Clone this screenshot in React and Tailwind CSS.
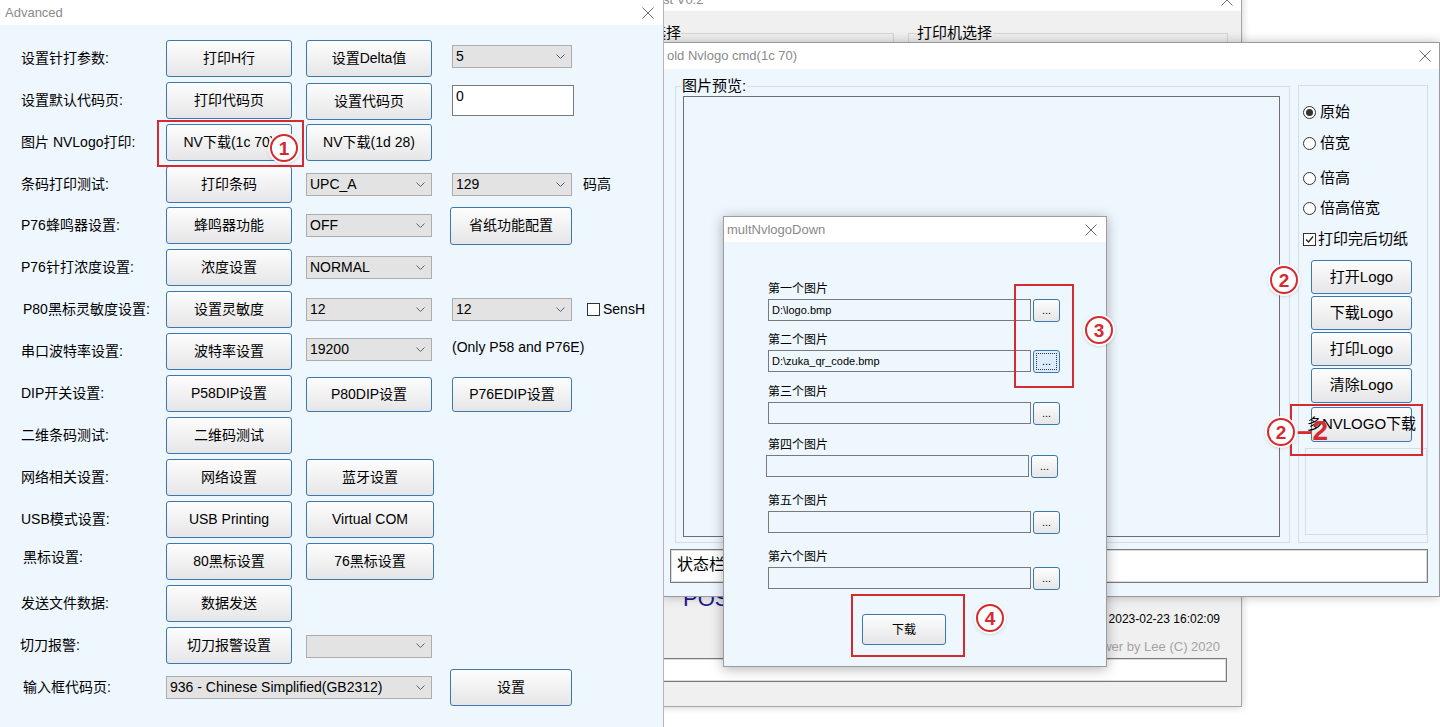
import React from 'react'

// shared bits for the old-style win forms
const CloseX = () => (
  <svg width="12" height="12" viewBox="0 0 12 12">
    <path d="M0.5 0.5L11.5 11.5M11.5 0.5L0.5 11.5" stroke="#6b6b6b" strokeWidth="1" />
  </svg>
)

const Btn = ({ children, className = '' }) => (
  <button
    className={`flex shrink-0 items-center justify-center whitespace-nowrap rounded-[3px] border border-[#3c78b0] bg-linear-to-b from-[#fdfdfd] to-[#e6e6e8] text-black ${className}`}
  >
    {children}
  </button>
)

const Combo = ({ value, className = '' }) => (
  <div
    className={`flex h-[23px] shrink-0 items-center justify-between border border-[#adadad] bg-[#e3e3e3] pl-[3px] pr-[6px] text-[14px] text-black ${className}`}
  >
    <span>{value}</span>
    <svg width="9" height="6" viewBox="0 0 9 6">
      <path d="M0.5 0.5L4.5 4.5L8.5 0.5" fill="none" stroke="#606060" />
    </svg>
  </div>
)

const CheckBox = ({ checked }) => (
  <span className="flex h-[13px] w-[13px] shrink-0 items-center justify-center border border-[#333] bg-white">
    {checked && (
      <svg width="9" height="9" viewBox="0 0 9 9">
        <path d="M1 4.5L3.5 7L8 1.5" fill="none" stroke="#222" strokeWidth="1.3" />
      </svg>
    )}
  </span>
)

const Radio = ({ checked }) => (
  <span className="flex h-[13px] w-[13px] shrink-0 items-center justify-center rounded-full border border-[#333] bg-white">
    {checked && <span className="h-[7px] w-[7px] rounded-full bg-[#333]" />}
  </span>
)

const Row = ({ label, labelClass = 'pl-[21px]', className = '', children }) => (
  <div className={`mb-[5px] flex h-[37px] items-center ${className}`}>
    <div className={`w-[166px] shrink-0 text-[14px] text-black ${labelClass}`}>{label}</div>
    {children}
  </div>
)

const FileRow = ({ label, value, className = '', boxClass = '', focus }) => (
  <div className={className}>
    <div className="h-[16px] text-[12px] leading-[16px] text-black">{label}</div>
    <div className={`mt-[2px] flex ${boxClass}`}>
      <div className="h-[22px] w-[263px] border border-[#7a7a7a] pl-[3px] text-[11px] leading-[20px] text-black">
        {value}
      </div>
      {focus ? (
        <button className="ml-[2px] flex h-[23px] w-[27px] items-center justify-center rounded-[3px] border border-[#3c78b0] bg-[#dcecfc] p-[2px]">
          <span className="flex h-full w-full items-center justify-center border border-dotted border-[#333] text-[11px] leading-none">...</span>
        </button>
      ) : (
        <Btn className="ml-[2px] h-[23px] w-[27px] text-[11px] leading-none">...</Btn>
      )}
    </div>
  </div>
)

const Num = ({ n, className = '' }) => (
  <div
    className={`absolute z-50 flex h-[28px] w-[28px] items-center justify-center rounded-full border-2 border-[#d42a30] bg-white text-[19px] font-bold leading-none text-[#d42a30] shadow-[0_0_0_2px_rgba(255,255,255,0.9),0_1px_4px_rgba(0,0,0,0.35)] ${className}`}
  >
    {n}
  </div>
)

export default function App() {
  return (
    <div className="relative h-[727px] w-[1440px] overflow-hidden bg-white font-['Liberation_Sans','Noto_Sans_CJK_SC',sans-serif]">
      {/* back main window */}
      <div className="absolute -top-[16px] left-[560px] z-10 flex h-[723px] w-[682px] flex-col border border-[#a5a5a5] bg-[#f0f0f0] shadow-[0_0_8px_rgba(0,0,0,0.2)]">
        <div className="flex h-[26px] items-center justify-between bg-white pl-[102px] pr-[8px] pt-[4px] text-[13px] text-[#8a8a8a]">
          <span>st V0.2</span>
          <CloseX />
        </div>
        <div className="mt-[22px] flex">
          <div className="relative ml-[19px] h-[200px] w-[314px] border border-[#d5d5d5]">
            <span className="absolute -top-[10px] left-[40px] bg-[#f0f0f0] text-[15px] leading-[18px]">端口选择</span>
          </div>
          <div className="relative ml-[14px] h-[200px] w-[320px] border border-[#d5d5d5]">
            <span className="absolute -top-[10px] left-[7px] bg-[#f0f0f0] px-[1px] text-[15px] leading-[18px]">打印机选择</span>
          </div>
        </div>
        <div className="mt-auto">
          <div className="h-[22px] pl-[122px] text-[22px] leading-[22px] text-[#1c1c96]">POS</div>
          <div className="pr-[21px] text-right text-[12px] leading-[18px] text-black">2023-02-23 16:02:09</div>
          <div className="mt-[10px] pr-[21px] text-right text-[13px] leading-[18px] text-[#a3a3a3]">wer by Lee (C) 2020</div>
          <div className="mr-[14px] mt-[2px] h-[24px] border border-[#7a7a7a] bg-white shadow-[inset_0_0_0_1px_#dcdcdc]" />
          <div className="h-[24px]" />
        </div>
      </div>

      {/* Nvlogo window */}
      <div className="absolute left-[663px] top-[42px] z-20 h-[555px] w-[777px] border border-[#9a9a9a] bg-[#eef6fe] shadow-[0_0_10px_rgba(0,0,0,0.25)]">
        <div className="flex h-[26px] items-center justify-between bg-white pl-[3px] pr-[8px] text-[13px] text-[#8a8a8a]">
          <span>old Nvlogo cmd(1c 70)</span>
          <CloseX />
        </div>
        <div className="flex px-[11px] pt-[17px]">
          <div className="relative h-[457px] w-[615px] border border-[#d6dde3]">
            <span className="absolute -top-[10px] left-[5px] bg-[#eef6fe] px-[1px] text-[15px] leading-[18px] text-black">图片预览:</span>
            <div className="ml-[7px] mt-[9px] h-[441px] w-[597px] border border-[#6e6e6e]" />
          </div>
          <div className="-mt-[1px] ml-[8px] flex h-[458px] w-[130px] flex-col border border-[#d6dde3] px-[4px] pt-[16px] text-[15px] text-black">
            <div className="flex h-[20px] items-center gap-[4px]"><Radio checked />原始</div>
            <div className="mt-[11px] flex h-[20px] items-center gap-[4px]"><Radio />倍宽</div>
            <div className="mt-[15px] flex h-[20px] items-center gap-[4px]"><Radio />倍高</div>
            <div className="mt-[10px] flex h-[20px] items-center gap-[4px]"><Radio />倍高倍宽</div>
            <div className="mt-[11px] flex h-[20px] items-center gap-[2px]"><CheckBox checked />打印完后切纸</div>
            <Btn className="ml-[8px] mt-[11px] h-[34px] w-[101px] text-[15px]">打开Logo</Btn>
            <Btn className="ml-[8px] mt-[2px] h-[34px] w-[101px] text-[15px]">下载Logo</Btn>
            <Btn className="ml-[8px] mt-[2px] h-[34px] w-[101px] text-[15px]">打印Logo</Btn>
            <Btn className="ml-[8px] mt-[2px] h-[35px] w-[101px] text-[15px]">清除Logo</Btn>
            <Btn className="ml-[8px] mt-[4px] h-[35px] w-[101px] text-[15px]">多NVLOGO下载</Btn>
            <div className="ml-[2px] mt-[6px] h-[87px] w-[122px] shrink-0 border border-[#d6dde3]" />
          </div>
        </div>
        <div className="ml-[6px] mt-[6px] h-[34px] w-[758px] border border-[#7a7a7a] bg-white pl-[6px] pt-[5px] text-[16px] leading-[20px] text-black shadow-[inset_0_0_0_1px_#dcdcdc]">
          状态栏
        </div>
      </div>

      {/* multNvlogoDown dialog */}
      <div className="absolute left-[723px] top-[216px] z-30 h-[451px] w-[384px] border border-[#9c9c9c] bg-[#eef6fe] shadow-[0_2px_12px_rgba(0,0,0,0.3)]">
        <div className="flex h-[25px] items-center justify-between bg-white pl-[3px] pr-[9px] text-[13px] text-[#8a8a8a]">
          <span>multNvlogoDown</span>
          <CloseX />
        </div>
        <div className="pl-[44px]">
          <FileRow className="pt-[39px]" label="第一个图片" value={'D:\\logo.bmp'} />
          <FileRow className="mt-[10px]" label="第二个图片" value={'D:\\zuka_qr_code.bmp'} focus />
          <FileRow className="mt-[11px]" label="第三个图片" />
          <FileRow className="mt-[12px]" boxClass="-ml-[2px]" label="第四个图片" />
          <FileRow className="mt-[15px]" label="第五个图片" />
          <FileRow className="mt-[15px]" label="第六个图片" />
          <Btn className="ml-[94px] mt-[24px] h-[31px] w-[84px] text-[12px]">下载</Btn>
        </div>
      </div>

      {/* Advanced window */}
      <div className="absolute left-0 top-0 z-40 h-[727px] w-[664px] border-r border-[#b5b5b5] bg-[#eef6fe]">
        <div className="flex h-[25px] items-center justify-between bg-white pl-[5px] pr-[9px] text-[13px] text-[#8a8a8a]">
          <span>Advanced</span>
          <CloseX />
        </div>
        <div className="pt-[15px] text-[14px]">
          <Row label="设置针打参数:">
            <Btn className="h-[37px] w-[126px]">打印H行</Btn>
            <Btn className="ml-[14px] h-[37px] w-[126px]">设置Delta值</Btn>
            <Combo value="5" className="-mt-[4px] ml-[20px] w-[120px]" />
          </Row>
          <Row label="设置默认代码页:">
            <Btn className="h-[37px] w-[126px]">打印代码页</Btn>
            <Btn className="ml-[14px] mt-[2px] h-[37px] w-[126px]">设置代码页</Btn>
            <div className="ml-[20px] h-[31px] w-[122px] border border-[#7a7a7a] bg-white pl-[3px] text-[14px] leading-[20px]">0</div>
          </Row>
          <Row label="图片 NVLogo打印:">
            <Btn className="h-[37px] w-[126px]">NV下载(1c 70)</Btn>
            <Btn className="ml-[14px] h-[37px] w-[126px]">NV下载(1d 28)</Btn>
          </Row>
          <Row label="条码打印测试:">
            <Btn className="h-[37px] w-[126px]">打印条码</Btn>
            <Combo value="UPC_A" className="ml-[14px] w-[126px]" />
            <Combo value="129" className="ml-[20px] w-[120px]" />
            <span className="ml-[11px]">码高</span>
          </Row>
          <Row label="P76蜂鸣器设置:" className="-mt-[1px]">
            <Btn className="h-[37px] w-[126px]">蜂鸣器功能</Btn>
            <Combo value="OFF" className="ml-[14px] w-[126px]" />
            <Btn className="ml-[18px] h-[38px] w-[122px]">省纸功能配置</Btn>
          </Row>
          <Row label="P76针打浓度设置:">
            <Btn className="h-[37px] w-[126px]">浓度设置</Btn>
            <Combo value="NORMAL" className="ml-[14px] w-[126px]" />
          </Row>
          <Row label="P80黑标灵敏度设置:" labelClass="pl-[23px]">
            <Btn className="h-[37px] w-[126px]">设置灵敏度</Btn>
            <Combo value="12" className="ml-[14px] w-[126px]" />
            <Combo value="12" className="ml-[20px] w-[120px]" />
            <span className="ml-[15px] flex items-center gap-[3px]">
              <CheckBox />
              SensH
            </span>
          </Row>
          <Row label="串口波特率设置:" className="mt-[4px]">
            <Btn className="h-[37px] w-[126px]">波特率设置</Btn>
            <Combo value="19200" className="-mt-[4px] ml-[14px] w-[126px]" />
            <span className="-mt-[8px] ml-[20px]">(Only P58 and P76E)</span>
          </Row>
          <Row label="DIP开关设置:">
            <Btn className="h-[37px] w-[126px]">P58DIP设置</Btn>
            <Btn className="ml-[14px] mt-[2px] h-[35px] w-[126px]">P80DIP设置</Btn>
            <Btn className="ml-[20px] mt-[2px] h-[35px] w-[120px]">P76EDIP设置</Btn>
          </Row>
          <Row label="二维条码测试:">
            <Btn className="h-[37px] w-[126px]">二维码测试</Btn>
          </Row>
          <Row label="网络相关设置:">
            <Btn className="h-[37px] w-[126px]">网络设置</Btn>
            <Btn className="ml-[14px] h-[37px] w-[128px]">蓝牙设置</Btn>
          </Row>
          <Row label="USB模式设置:">
            <Btn className="h-[37px] w-[126px]">USB Printing</Btn>
            <Btn className="ml-[14px] h-[37px] w-[128px]">Virtual COM</Btn>
          </Row>
          <Row label="黑标设置:" labelClass="pl-[23px] -mt-[8px]">
            <Btn className="h-[37px] w-[126px]">80黑标设置</Btn>
            <Btn className="ml-[14px] h-[37px] w-[128px]">76黑标设置</Btn>
          </Row>
          <Row label="发送文件数据:">
            <Btn className="h-[37px] w-[126px]">数据发送</Btn>
          </Row>
          <Row label="切刀报警:" labelClass="pl-[20px]">
            <Btn className="h-[37px] w-[126px]">切刀报警设置</Btn>
            <Combo value="" className="ml-[14px] mt-[1px] w-[126px]" />
          </Row>
          <Row label="输入框代码页:" labelClass="pl-[23px]">
            <Combo value="936 - Chinese Simplified(GB2312)" className="w-[266px]" />
            <Btn className="ml-[18px] h-[37px] w-[122px]">设置</Btn>
          </Row>
        </div>
      </div>

      {/* red annotations */}
      <div className="absolute left-[157px] top-[120px] z-50 h-[47px] w-[147px] border-2 border-[#d42a30]" />
      <Num n="1" className="left-[270px] top-[134px]" />
      <Num n="2" className="left-[1270px] top-[266px]" />
      <div className="absolute left-[1290px] top-[404px] z-50 h-[52px] w-[133px] border-2 border-[#d42a30]" />
      <Num n="2" className="left-[1267px] top-[418px]" />
      <span className="absolute left-[1297px] top-[415px] z-50 text-[28px] font-bold leading-[32px] text-[#d42a30]">–2</span>
      <div className="absolute left-[1014px] top-[284px] z-50 h-[104px] w-[60px] border-2 border-[#d42a30]" />
      <Num n="3" className="left-[1085px] top-[316px]" />
      <div className="absolute left-[851px] top-[594px] z-50 h-[63px] w-[114px] border-2 border-[#d42a30]" />
      <Num n="4" className="left-[976px] top-[604px]" />
    </div>
  )
}
